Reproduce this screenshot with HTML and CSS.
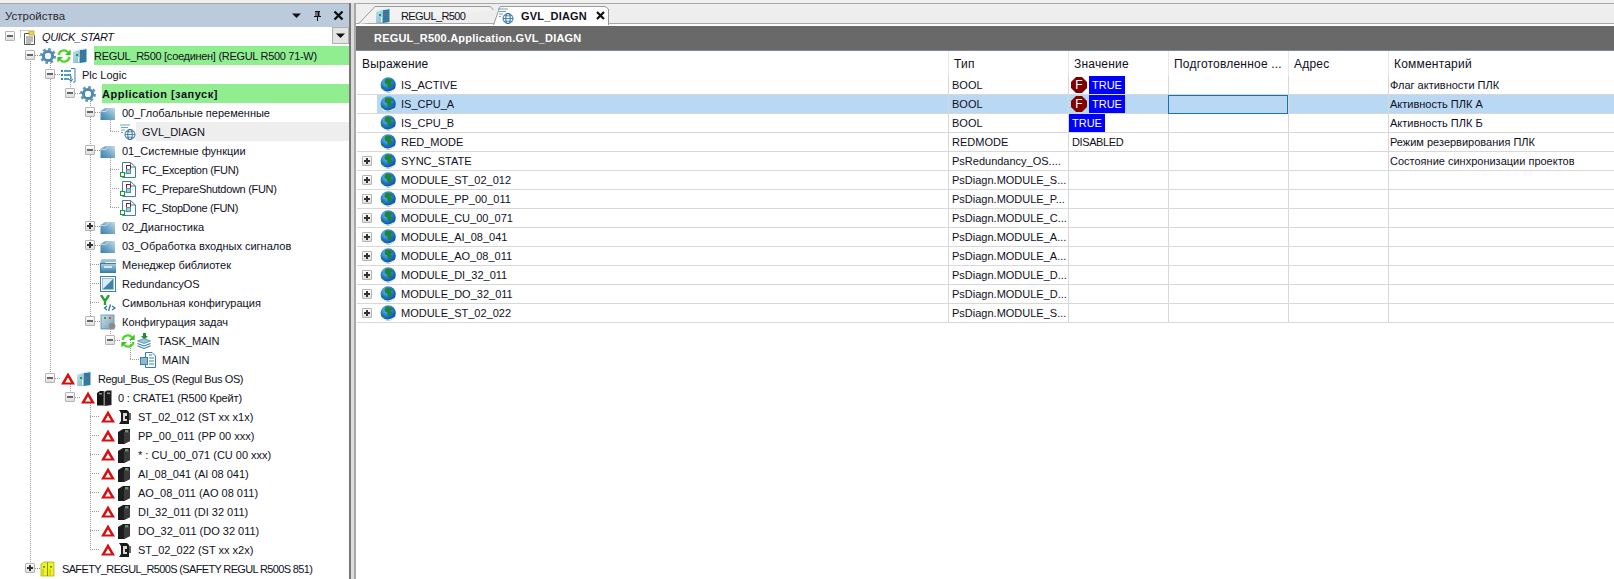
FILE: index.html
```html
<!DOCTYPE html>
<html lang="ru">
<head>
<meta charset="utf-8">
<title>Устройства</title>
<link rel="stylesheet" href="styles.css">
</head>
<body>
<svg class="defs" aria-hidden="true">
  <defs>
    <linearGradient id="gFolder" x1="1" y1="0" x2="0" y2="1"><stop offset="0" stop-color="#c6dcea"/><stop offset=".55" stop-color="#6fa5c6"/><stop offset="1" stop-color="#3a7ea8"/></linearGradient>
    <linearGradient id="gLib" x1="0" y1="0" x2="0" y2="1"><stop offset="0" stop-color="#a9cbe0"/><stop offset="1" stop-color="#3f83ab"/></linearGradient>
    <linearGradient id="gBox" x1="0" y1="0" x2="1" y2="1"><stop offset="0" stop-color="#cfe0ea"/><stop offset="1" stop-color="#6f9cb8"/></linearGradient>
    <linearGradient id="gPlc" x1="0" y1="0" x2="1" y2="1"><stop offset="0" stop-color="#bfe0ea"/><stop offset="1" stop-color="#7fb8d0"/></linearGradient>
    <radialGradient id="gGlobe" cx=".4" cy=".3" r=".8"><stop offset="0" stop-color="#6cc8f8"/><stop offset=".55" stop-color="#1a72d8"/><stop offset="1" stop-color="#0a3a85"/></radialGradient>
    <symbol id="i-proj" viewBox="0 0 16 16">
      <path d="M0.5 1.5H9M0.5 1.5V9" fill="none" stroke="#999" stroke-dasharray="1 1"/>
      <path d="M4.5 4.5H12.5L14.5 6.500V15.500H4.500Z" fill="#fff" stroke="#555"/>
      <path d="M6 8H13M6 10H13M6 12H13M6 14H11" stroke="#777"/>
      <rect x="9" y="2" width="5" height="4" fill="#f4d23c" stroke="#a8921e" stroke-width=".6"/>
    </symbol>
    <symbol id="i-gear" viewBox="0 0 16 16">
      <circle cx="8" cy="8" r="6.8" fill="none" stroke="#5e92b8" stroke-width="2.4" stroke-dasharray="2.7 2.64"/>
      <circle cx="8" cy="8" r="4.600" fill="none" stroke="#5088ae" stroke-width="3"/>
      <circle cx="8" cy="8" r="3" fill="#f2f8fb"/>
    </symbol>
    <symbol id="i-sync" viewBox="0 0 16 16">
      <path d="M2.6 7A5.4 5.4 0 0 1 12 4.2" fill="none" stroke="#4ed62a" stroke-width="2.2"/>
      <path d="M14.6 1.4V7H9Z" fill="#3cc41c"/>
      <path d="M13.4 9A5.4 5.4 0 0 1 4 11.8" fill="none" stroke="#4ed62a" stroke-width="2.2"/>
      <path d="M1.4 14.6V9H7Z" fill="#3cc41c"/>
    </symbol>
    <symbol id="i-plc" viewBox="0 0 16 16">
      <path d="M1 4L8 2V15H1Z" fill="url(#gPlc)"/>
      <path d="M8 2L14.500 1V14L8 15Z" fill="#2f7ba3"/>
      <path d="M1 3.500L8 1.500L14.500 0.500" fill="none" stroke="#d8ecf4"/>
      <rect x="4" y="6" width="2" height="2" fill="#1f9d55"/>
      <rect x="9.500" y="6" width="1.600" height="2" fill="#d84a4a"/>
      <rect x="6" y="9" width="1" height="5" fill="#eef8fc"/>
    </symbol>
    <symbol id="i-logic" viewBox="0 0 16 16">
      <path d="M1 3H3V5H1ZM1 7H3V9H1ZM1 11H3V13H1Z" fill="#1d8fa8"/>
      <path d="M4 4H11M4 8H11M4 12H9" stroke="#2080a8" stroke-width="1.6"/>
      <path d="M11 1.5H15V15H13" fill="none" stroke="#3a7fa8"/>
      <path d="M11 9V14M9.2 12.2L11 14.5L12.8 12.2" fill="none" stroke="#2f6f96"/>
    </symbol>
    <symbol id="i-folder" viewBox="0 0 16 16">
      <path d="M0.5 6L5 3H15V15H0.5Z" fill="url(#gFolder)"/>
      <path d="M0.5 6.5H6L8 4" fill="none" stroke="#eef5fa" stroke-width=".6"/>
    </symbol>
    <symbol id="i-gvl" viewBox="0 0 16 16">
      <path d="M0 1H10M1 3.5H8M1 6H5M1 8.5H3" stroke="#6fa3c3"/>
      <circle cx="10" cy="10.5" r="5" fill="#fff" stroke="#2b6f9d"/>
      <ellipse cx="10" cy="10.5" rx="2.2" ry="5" fill="none" stroke="#2b6f9d"/>
      <path d="M5 10.5H15M6 7.8H14M6 13.2H14" stroke="#2b6f9d" stroke-width=".8"/>
    </symbol>
    <symbol id="i-fun" viewBox="0 0 16 16">
      <path d="M2.5 0.5H10.5L15.5 5V15.5H2.5Z" fill="#fff" stroke="#3f7fa6"/>
      <path d="M10.5 0.5V5H15.5" fill="none" stroke="#3f7fa6"/>
      <rect x="6.5" y="3.5" width="4" height="4" fill="#fff" stroke="#8b1a1a"/>
      <rect x="6.5" y="7.5" width="4" height="4" fill="#9cc8e0" stroke="#4c90b8"/>
      <rect x="0.5" y="10.5" width="4" height="4" fill="#fff" stroke="#1a9a2a"/>
      <path d="M4.5 11H6.5" stroke="#4c90b8"/>
    </symbol>
    <symbol id="i-lib" viewBox="0 0 16 16">
      <path d="M0.5 15.5V3.5L2 2H16V5H6L4 7H0.5" fill="url(#gLib)"/>
      <rect x="0.5" y="6.5" width="15.5" height="9" fill="#fff" stroke="#3a7fa8"/>
      <rect x="1" y="7" width="15" height="8" fill="url(#gLib)"/>
      <path d="M4 10H12" stroke="#fff" stroke-width="1.4"/>
    </symbol>
    <symbol id="i-red" viewBox="0 0 16 16">
      <rect x="0.5" y="0.5" width="15" height="15" fill="#fff" stroke="#3a7fa8"/>
      <rect x="2.5" y="2.5" width="11" height="11" fill="#dceaf2" stroke="#6f9cb8" stroke-width=".6"/>
      <path d="M3 13L13 3V13Z" fill="#3e82ac"/>
    </symbol>
    <symbol id="i-sym" viewBox="0 0 16 16">
      <path d="M1 0L5 6V10M9 0L5 6" fill="none" stroke="#2c9f30" stroke-width="2.4"/>
      <path d="M7 11L4.5 13L7 15M12 11L15 13L12 15" fill="none" stroke="#1f6fa8" stroke-width="1.2"/>
      <path d="M8.5 16L10.5 9.5" stroke="#1f6fa8" stroke-width="1.2"/>
    </symbol>
    <symbol id="i-cfg" viewBox="0 0 16 16">
      <rect x="1" y="1" width="13" height="14" fill="url(#gBox)" stroke="#5e8cab" stroke-width=".8"/>
      <rect x="4" y="3" width="2" height="2" fill="#2aa84a"/>
      <rect x="9" y="3" width="2" height="2" fill="#d84a3a"/>
      <circle cx="12" cy="12" r="3.2" fill="#8a8a8a" stroke="#a5a5a5" stroke-dasharray="1.2 .9"/>
    </symbol>
    <symbol id="i-task" viewBox="0 0 16 16">
      <path d="M7 0H10V3H12L8.5 6.5L5 3H7Z" fill="#1e8f2c"/>
      <path d="M1.5 8L8 5.5L14.5 8L8 10.5Z" fill="#9cc4dc" stroke="#3a7fa8" stroke-width=".7"/>
      <path d="M1.5 10.5L8 13L14.5 10.5M1.5 12.8L8 15.4L14.5 12.8" fill="none" stroke="#3a7fa8" stroke-width="1.1"/>
    </symbol>
    <symbol id="i-main" viewBox="0 0 16 16">
      <path d="M5.5 0.5H12L15.5 4V15.5H5.5Z" fill="#fff" stroke="#3a7fa8"/>
      <path d="M9 3H12M9 6H14M9 9H14M9 12H14" stroke="#3a7fa8"/>
      <rect x="0.5" y="5.5" width="7" height="7" fill="#8db9d4" stroke="#3a7fa8"/>
    </symbol>
    <symbol id="i-warn" viewBox="0 0 16 16">
      <path d="M8 1.500L15 13.500H1Z" fill="#d80f0f"/>
      <path d="M8 6.500L10.900 11.400H5.100Z" fill="#fff"/>
    </symbol>
    <symbol id="i-mod" viewBox="0 0 16 16">
      <path d="M2 4L7 1H14V13L8 16H2Z" fill="#1c1c1c"/>
      <path d="M8 4H14V13L8 16Z" fill="#3a3a3a"/>
      <rect x="9" y="2" width="3.500" height="2.400" fill="#6a8f70"/>
    </symbol>
    <symbol id="i-st" viewBox="0 0 16 16">
      <path d="M3 1H11L13 3V15H3L5 12V4Z" fill="#1a1a1a"/>
      <path d="M7 4H11V7H9V10H11V12H7Z" fill="#d8d8d8"/>
      <path d="M13 4H15V11H13Z" fill="#666"/>
    </symbol>
    <symbol id="i-crate" viewBox="0 0 16 16">
      <path d="M1 3L4 1H8V15.500H1Z" fill="#141414"/>
      <path d="M8.500 2L11 0.500H15.500V15L8.500 16Z" fill="#1c1c1c"/>
      <path d="M8 1V16" stroke="#888"/>
      <rect x="3" y="3" width="3" height="1.600" fill="#8a8a8a"/>
      <rect x="11" y="2.500" width="3" height="1.600" fill="#8a8a8a"/>
    </symbol>
    <symbol id="i-safety" viewBox="0 0 16 16">
      <path d="M1 3L4 1H14V15H1Z" fill="#f2f21c" stroke="#a0a020" stroke-width=".7"/>
      <path d="M7.5 1.5V15" stroke="#8a8a20"/>
      <rect x="3" y="5" width="2" height="1.6" fill="#35a035"/>
      <rect x="10" y="5" width="2" height="1.6" fill="#35a035"/>
      <path d="M3 8V14M10 8V14" stroke="#b8b820"/>
    </symbol>
    <symbol id="i-globe" viewBox="0 0 16 16">
      <circle cx="8.2" cy="7.800" r="7.600" fill="url(#gGlobe)"/>
      <path d="M6 1.5C9 1 12 2.4 13 4C11 5 10.5 6 12 7.5C13.5 9 11 11.5 8.5 11C7 9 8 7.5 6 7C4 6.5 4 3.5 6 1.5Z" fill="#20843a"/>
      <path d="M1.6 9C3 9 4 10 5 11.5C4.8 13 4 13.6 3.4 13.4C2.4 12.2 1.8 10.6 1.6 9Z" fill="#20843a"/>
      <path d="M2 12.500C4 15.600 10 16 14 12.800" fill="none" stroke="#e4f0fa" stroke-width="1.200"/>
    </symbol>
    <symbol id="i-f" viewBox="0 0 16 16">
      <path d="M5 0H11L16 5V11L11 16H5L0 11V5Z" fill="#800000"/>
    </symbol>
  </defs>
</svg>

<div class="app">
  <aside class="devices">
    <header class="dev-head">
      <span class="dev-title">Устройства</span>
      <span class="dev-tools">
        <svg class="dev-tool" viewBox="0 0 11 11"><path d="M1 3.5H10L5.5 8Z" fill="#111"/></svg>
        <svg class="dev-tool" viewBox="0 0 11 11"><path d="M3 1H8V2H7.5V6H9V7H6V11H5V7H2V6H3.5V2H3ZM4.5 2V6H5.5V2Z" fill="#111"/></svg>
        <svg class="dev-tool" viewBox="0 0 11 11"><path d="M1.5 1.5L9.5 9.5M9.5 1.5L1.5 9.5" stroke="#111" stroke-width="2.4"/></svg>
      </span>
    </header>
    <div class="tree">
      <svg class="guides" viewBox="0 0 349 552" aria-hidden="true">
        <path d="M30.5 28V541M50.5 28V351M70.5 47V66M70.5 351V370M90.5 66V294M90.5 370V522M110.5 85V104M110.5 123V180M110.5 294V313M130.5 313V332"/>
        <path d="M35 28.5H40M55 47.5H60M75 66.5H80M95 85.5H100M110 104.5H120M95 123.5H100M110 142.5H120M110 161.5H120M110 180.5H120M95 199.5H100M95 218.5H100M90 237.5H100M90 256.5H100M90 275.5H100M95 294.5H100M115 313.5H120M130 332.5H140M55 351.5H60M75 370.5H80M90 389.5H100M90 408.5H100M90 427.5H100M90 446.5H100M90 465.5H100M90 484.5H100M90 503.5H100M90 522.5H100M35 541.5H40"/>
      </svg>
      <button class="tree-drop"><svg viewBox="0 0 11 11"><path d="M1 3.5H10L5.5 8Z" fill="#111"/></svg></button>

      <div class="row lv0"><i class="tog minus"></i><svg class="ic"><use href="#i-proj"/></svg><span class="lbl it tight-3">QUICK_START</span></div>
      <div class="row lv1"><i class="tog minus"></i><svg class="ic"><use href="#i-gear"/></svg><svg class="ic"><use href="#i-sync"/></svg><svg class="ic"><use href="#i-plc"/></svg><span class="lbl green tight-2">REGUL_R500 [соединен] (REGUL R500 71-W)</span></div>
      <div class="row lv2"><i class="tog minus"></i><svg class="ic"><use href="#i-logic"/></svg><span class="lbl">Plc Logic</span></div>
      <div class="row lv3"><i class="tog minus"></i><svg class="ic"><use href="#i-gear"/></svg><span class="lbl green bold">Application [запуск]</span></div>
      <div class="row lv4"><i class="tog minus"></i><svg class="ic"><use href="#i-folder"/></svg><span class="lbl">00_Глобальные переменные</span></div>
      <div class="row lv5 current"><i class="tog none"></i><svg class="ic"><use href="#i-gvl"/></svg><span class="lbl">GVL_DIAGN</span></div>
      <div class="row lv4"><i class="tog minus"></i><svg class="ic"><use href="#i-folder"/></svg><span class="lbl">01_Системные функции</span></div>
      <div class="row lv5"><i class="tog none"></i><svg class="ic"><use href="#i-fun"/></svg><span class="lbl tight-2">FC_Exception (FUN)</span></div>
      <div class="row lv5"><i class="tog none"></i><svg class="ic"><use href="#i-fun"/></svg><span class="lbl tight-2">FC_PrepareShutdown (FUN)</span></div>
      <div class="row lv5"><i class="tog none"></i><svg class="ic"><use href="#i-fun"/></svg><span class="lbl tight-3">FC_StopDone (FUN)</span></div>
      <div class="row lv4"><i class="tog plus"></i><svg class="ic"><use href="#i-folder"/></svg><span class="lbl">02_Диагностика</span></div>
      <div class="row lv4"><i class="tog plus"></i><svg class="ic"><use href="#i-folder"/></svg><span class="lbl">03_Обработка входных сигналов</span></div>
      <div class="row lv4"><i class="tog none"></i><svg class="ic"><use href="#i-lib"/></svg><span class="lbl">Менеджер библиотек</span></div>
      <div class="row lv4"><i class="tog none"></i><svg class="ic"><use href="#i-red"/></svg><span class="lbl">RedundancyOS</span></div>
      <div class="row lv4"><i class="tog none"></i><svg class="ic"><use href="#i-sym"/></svg><span class="lbl">Символьная конфигурация</span></div>
      <div class="row lv4"><i class="tog minus"></i><svg class="ic"><use href="#i-cfg"/></svg><span class="lbl">Конфигурация задач</span></div>
      <div class="row lv5"><i class="tog minus"></i><svg class="ic"><use href="#i-sync"/></svg><svg class="ic"><use href="#i-task"/></svg><span class="lbl">TASK_MAIN</span></div>
      <div class="row lv6"><i class="tog none"></i><svg class="ic"><use href="#i-main"/></svg><span class="lbl">MAIN</span></div>
      <div class="row lv2"><i class="tog minus"></i><svg class="ic"><use href="#i-warn"/></svg><svg class="ic"><use href="#i-plc"/></svg><span class="lbl tight-3">Regul_Bus_OS (Regul Bus OS)</span></div>
      <div class="row lv3"><i class="tog minus"></i><svg class="ic"><use href="#i-warn"/></svg><svg class="ic"><use href="#i-crate"/></svg><span class="lbl tight-1">0 : CRATE1 (R500 Крейт)</span></div>
      <div class="row lv4"><i class="tog none"></i><svg class="ic"><use href="#i-warn"/></svg><svg class="ic"><use href="#i-st"/></svg><span class="lbl">ST_02_012 (ST xx x1x)</span></div>
      <div class="row lv4"><i class="tog none"></i><svg class="ic"><use href="#i-warn"/></svg><svg class="ic"><use href="#i-mod"/></svg><span class="lbl">PP_00_011 (PP 00 xxx)</span></div>
      <div class="row lv4"><i class="tog none"></i><svg class="ic"><use href="#i-warn"/></svg><svg class="ic"><use href="#i-mod"/></svg><span class="lbl">* : CU_00_071 (CU 00 xxx)</span></div>
      <div class="row lv4"><i class="tog none"></i><svg class="ic"><use href="#i-warn"/></svg><svg class="ic"><use href="#i-mod"/></svg><span class="lbl">AI_08_041 (AI 08 041)</span></div>
      <div class="row lv4"><i class="tog none"></i><svg class="ic"><use href="#i-warn"/></svg><svg class="ic"><use href="#i-mod"/></svg><span class="lbl">AO_08_011 (AO 08 011)</span></div>
      <div class="row lv4"><i class="tog none"></i><svg class="ic"><use href="#i-warn"/></svg><svg class="ic"><use href="#i-mod"/></svg><span class="lbl">DI_32_011 (DI 32 011)</span></div>
      <div class="row lv4"><i class="tog none"></i><svg class="ic"><use href="#i-warn"/></svg><svg class="ic"><use href="#i-mod"/></svg><span class="lbl">DO_32_011 (DO 32 011)</span></div>
      <div class="row lv4"><i class="tog none"></i><svg class="ic"><use href="#i-warn"/></svg><svg class="ic"><use href="#i-st"/></svg><span class="lbl">ST_02_022 (ST xx x2x)</span></div>
      <div class="row lv1"><i class="tog plus"></i><svg class="ic"><use href="#i-safety"/></svg><span class="lbl tight-4">SAFETY_REGUL_R500S (SAFETY REGUL R500S 851)</span></div>
    </div>
  </aside>

  <div class="splitter"></div>

  <main class="editor">
    <nav class="tabs">
      <div class="tab tab-back">
        <svg class="tab-shape" viewBox="0 0 136 18"><path d="M0.5 18L17 0.5H131C134 0.5 134 3 135.500 4" fill="#f2f2f2" stroke="#999"/></svg>
        <svg class="ic"><use href="#i-plc"/></svg>
        <span class="tab-text">REGUL_R500</span>
      </div>
      <div class="tab tab-active">
        <svg class="tab-shape" viewBox="0 0 116 19"><path d="M0.500 19L7 0.500H112L115.500 3V19" fill="#fff" stroke="#999"/></svg>
        <svg class="ic"><use href="#i-gvl"/></svg>
        <span class="tab-text">GVL_DIAGN</span>
        <svg class="tab-close" viewBox="0 0 9 9"><path d="M1 1L8 8M8 1L1 8" stroke="#111" stroke-width="2.2"/></svg>
      </div>
    </nav>
    <div class="path-bar">REGUL_R500.Application.GVL_DIAGN</div>
    <div class="grid">
      <div class="g-head">
        <div class="h-cell">Выражение</div><div class="h-cell">Тип</div><div class="h-cell">Значение</div><div class="h-cell">Подготовленное ...</div><div class="h-cell">Адрес</div><div class="h-cell">Комментарий</div>
      </div>
      <div class="g-row">
        <div class="c expr"><i class="tog none"></i><svg class="ic"><use href="#i-globe"/></svg><span class="name">IS_ACTIVE</span></div>
        <div class="c">BOOL</div>
        <div class="c val"><span class="forced"><svg class="ic"><use href="#i-f"/></svg><b>F</b></span><span class="tv">TRUE</span></div>
        <div class="c"></div><div class="c"></div><div class="c cmt">Флаг активности ПЛК</div>
      </div>
      <div class="g-row sel">
        <div class="c expr"><i class="tog none"></i><svg class="ic"><use href="#i-globe"/></svg><span class="name">IS_CPU_A</span></div>
        <div class="c">BOOL</div>
        <div class="c val"><span class="forced"><svg class="ic"><use href="#i-f"/></svg><b>F</b></span><span class="tv">TRUE</span></div>
        <div class="c focus"></div><div class="c"></div><div class="c cmt">Активность ПЛК А</div>
      </div>
      <div class="g-row">
        <div class="c expr"><i class="tog none"></i><svg class="ic"><use href="#i-globe"/></svg><span class="name">IS_CPU_B</span></div>
        <div class="c">BOOL</div>
        <div class="c val"><span class="tv">TRUE</span></div>
        <div class="c"></div><div class="c"></div><div class="c cmt">Активность ПЛК Б</div>
      </div>
      <div class="g-row">
        <div class="c expr"><i class="tog none"></i><svg class="ic"><use href="#i-globe"/></svg><span class="name">RED_MODE</span></div>
        <div class="c">REDMODE</div>
        <div class="c val"><span class="plain">DISABLED</span></div>
        <div class="c"></div><div class="c"></div><div class="c cmt">Режим резервирования ПЛК</div>
      </div>
      <div class="g-row">
        <div class="c expr"><i class="tog plus"></i><svg class="ic"><use href="#i-globe"/></svg><span class="name">SYNC_STATE</span></div>
        <div class="c">PsRedundancy_OS....</div>
        <div class="c"></div><div class="c"></div><div class="c"></div><div class="c cmt">Состояние синхронизации проектов</div>
      </div>
      <div class="g-row">
        <div class="c expr"><i class="tog plus"></i><svg class="ic"><use href="#i-globe"/></svg><span class="name">MODULE_ST_02_012</span></div>
        <div class="c">PsDiagn.MODULE_S...</div>
        <div class="c"></div><div class="c"></div><div class="c"></div><div class="c"></div>
      </div>
      <div class="g-row">
        <div class="c expr"><i class="tog plus"></i><svg class="ic"><use href="#i-globe"/></svg><span class="name">MODULE_PP_00_011</span></div>
        <div class="c">PsDiagn.MODULE_P...</div>
        <div class="c"></div><div class="c"></div><div class="c"></div><div class="c"></div>
      </div>
      <div class="g-row">
        <div class="c expr"><i class="tog plus"></i><svg class="ic"><use href="#i-globe"/></svg><span class="name">MODULE_CU_00_071</span></div>
        <div class="c">PsDiagn.MODULE_C...</div>
        <div class="c"></div><div class="c"></div><div class="c"></div><div class="c"></div>
      </div>
      <div class="g-row">
        <div class="c expr"><i class="tog plus"></i><svg class="ic"><use href="#i-globe"/></svg><span class="name">MODULE_AI_08_041</span></div>
        <div class="c">PsDiagn.MODULE_A...</div>
        <div class="c"></div><div class="c"></div><div class="c"></div><div class="c"></div>
      </div>
      <div class="g-row">
        <div class="c expr"><i class="tog plus"></i><svg class="ic"><use href="#i-globe"/></svg><span class="name">MODULE_AO_08_011</span></div>
        <div class="c">PsDiagn.MODULE_A...</div>
        <div class="c"></div><div class="c"></div><div class="c"></div><div class="c"></div>
      </div>
      <div class="g-row">
        <div class="c expr"><i class="tog plus"></i><svg class="ic"><use href="#i-globe"/></svg><span class="name">MODULE_DI_32_011</span></div>
        <div class="c">PsDiagn.MODULE_D...</div>
        <div class="c"></div><div class="c"></div><div class="c"></div><div class="c"></div>
      </div>
      <div class="g-row">
        <div class="c expr"><i class="tog plus"></i><svg class="ic"><use href="#i-globe"/></svg><span class="name">MODULE_DO_32_011</span></div>
        <div class="c">PsDiagn.MODULE_D...</div>
        <div class="c"></div><div class="c"></div><div class="c"></div><div class="c"></div>
      </div>
      <div class="g-row">
        <div class="c expr"><i class="tog plus"></i><svg class="ic"><use href="#i-globe"/></svg><span class="name">MODULE_ST_02_022</span></div>
        <div class="c">PsDiagn.MODULE_S...</div>
        <div class="c"></div><div class="c"></div><div class="c"></div><div class="c"></div>
      </div>
    </div>
  </main>
</div>
</body>
</html>
```

FILE: styles.css
```css
* { box-sizing: border-box; }
html, body { margin: 0; padding: 0; }
body {
  width: 1614px;
  height: 579px;
  overflow: hidden;
  background: #f0f0f0;
  font-family: "Liberation Sans", Arial, sans-serif;
  font-size: 11px;
  color: #10101c;
}
.defs { position: absolute; width: 0; height: 0; }
.app { display: flex; height: 579px; padding-top: 3px; }

/* devices panel */
.devices { width: 349px; display: flex; flex-direction: column; background: #fff; border-top: 1px solid #a8a8a8; }
.dev-head {
  height: 23px;
  background: #bccbdb;
  display: flex;
  align-items: center;
  justify-content: space-between;
  padding: 0 5px;
  font-size: 11.5px;
  color: #2a2a30;
}
.dev-tools { display: flex; gap: 10px; }
.dev-tool { width: 11px; height: 11px; display: block; }

.tree { position: relative; flex: 1; }
.guides { position: absolute; left: 0; top: 0; width: 349px; height: 552px; z-index: 0; }
.guides path { fill: none; stroke: #9a9a9a; stroke-width: 1; stroke-dasharray: 1 1; }
.tree-drop {
  position: absolute;
  right: 0;
  top: 0;
  width: 17px;
  height: 17px;
  padding: 2px;
  background: #e4e4e4;
  border: 1px solid #b0b0b0;
  z-index: 2;
}
.tree-drop svg { display: block; width: 11px; height: 11px; }

.row { position: relative; z-index: 1; height: 19px; display: flex; align-items: center; }
.lv0 { padding-left: 5px; }
.lv1 { padding-left: 25px; }
.lv2 { padding-left: 45px; }
.lv3 { padding-left: 65px; }
.lv4 { padding-left: 85px; }
.lv5 { padding-left: 105px; }
.lv6 { padding-left: 125px; }

.tog {
  position: relative;
  display: block;
  flex: none;
  width: 10px;
  height: 10px;
  margin-right: 5px;
  margin-top: -1px;
}
.tog.minus, .tog.plus {
  border: 1px solid #b4b4b4;
  border-radius: 1px;
  background: linear-gradient(#ffffff, #dedede);
}
.tog.minus::before, .tog.plus::before {
  content: "";
  position: absolute;
  left: 1px;
  top: 3px;
  width: 6px;
  height: 2px;
  background: #666;
}
.tog.plus::before { background: #333; }
.tog.plus::after {
  content: "";
  position: absolute;
  left: 3px;
  top: 1px;
  width: 2px;
  height: 6px;
  background: #333;
}
.ic { width: 16px; height: 16px; flex: none; display: block; }
.lbl { flex: 1; margin-left: 6px; height: 19px; line-height: 20px; white-space: nowrap; }
.it { font-style: italic; }
.bold { font-weight: 700; letter-spacing: .5px; }
.green { background: #90ee90; }
.current .lbl { margin-left: 0; padding-left: 6px; background: #eeeeee; }
.tight-1 { letter-spacing: -.15px; }
.tight-2 { letter-spacing: -.3px; }
.tight-3 { letter-spacing: -.4px; }
.tight-4 { letter-spacing: -.65px; }

/* splitter */
.splitter {
  width: 7px;
  flex: none;
  background: #dcdcdc;
  border-left: 2px solid #777;
  border-right: 2px solid #a8a8a8;
}

/* editor */
.editor { flex: 1; min-width: 0; display: flex; flex-direction: column; background: #fff; }
.tabs {
  height: 21px;
  flex: none;
  display: flex;
  padding: 2px 0 0 2px;
  background: #eeeeee;
  border-top: 1px solid #a8a8a8;
  border-bottom: 1px solid #a8a8a8;
}
.tab { position: relative; display: flex; align-items: center; height: 19px; }
.tab-shape { position: absolute; left: 0; top: 0; }
.tab-back { width: 135px; padding-left: 17px; }
.tab-back .tab-shape { width: 136px; height: 18px; }
.tab-active { width: 116px; padding-left: 5px; }
.tab-active .tab-shape { width: 116px; height: 19px; }
.tab .ic, .tab-text, .tab-close { position: relative; }
.tab-back .tab-text { margin-left: 10px; letter-spacing: -.6px; }
.tab-active .tab-text { margin-left: 7px; font-weight: 700; letter-spacing: .2px; }
.tab-close { width: 9px; height: 9px; margin-left: 9px; }

.path-bar {
  flex: none;
  margin-top: 2px;
  height: 25px;
  padding-left: 18px;
  line-height: 24px;
  background: #696969;
  border-bottom: 1px solid #7c8c98;
  color: #fff;
  font-weight: 700;
  letter-spacing: .2px;
}

.grid { flex: 1; padding-left: 1px; }
.g-head, .g-row {
  display: grid;
  grid-template-columns: 591px 120px 100px 120px 100px 1fr;
}
.g-head { height: 25px; }
.h-cell {
  display: flex;
  align-items: center;
  padding-left: 5px;
  font-size: 12px;
  letter-spacing: .2px;
  border-left: 1px solid #e8e8e8;
}
.h-cell:first-child { border-left: 0; }
.g-row { height: 19px; border-bottom: 1px solid #d8d8d8; }
.c {
  display: flex;
  align-items: center;
  min-width: 0;
  padding-left: 3px;
  height: 18px;
  border-left: 1px solid #d8d8d8;
  white-space: nowrap;
  overflow: hidden;
}
.cmt { padding-left: 1px; }
.expr { border-left: 0; padding-left: 5px; }
.expr .tog { margin-right: 8px; margin-top: 0; }
.expr .name { margin-left: 5px; }
.sel .c { background: #b8d8f4; }
.sel .expr { background: linear-gradient(to right, #fff 20px, #b8d8f4 20px); }
.sel .focus { border: 1px solid #1a70b8; height: 19px; }
.val { padding-left: 0; align-items: stretch; }
.forced { position: relative; display: flex; align-items: center; justify-content: center; width: 16px; margin: 0 2px 0 2px; color: #fff; }
.forced b { position: absolute; font-weight: 400; font-size: 12px; }
.tv { display: flex; align-items: center; padding: 0 3px; background: #0000ff; color: #fff; }
.plain { display: flex; align-items: center; padding-left: 3px; letter-spacing: -.4px; }
```
